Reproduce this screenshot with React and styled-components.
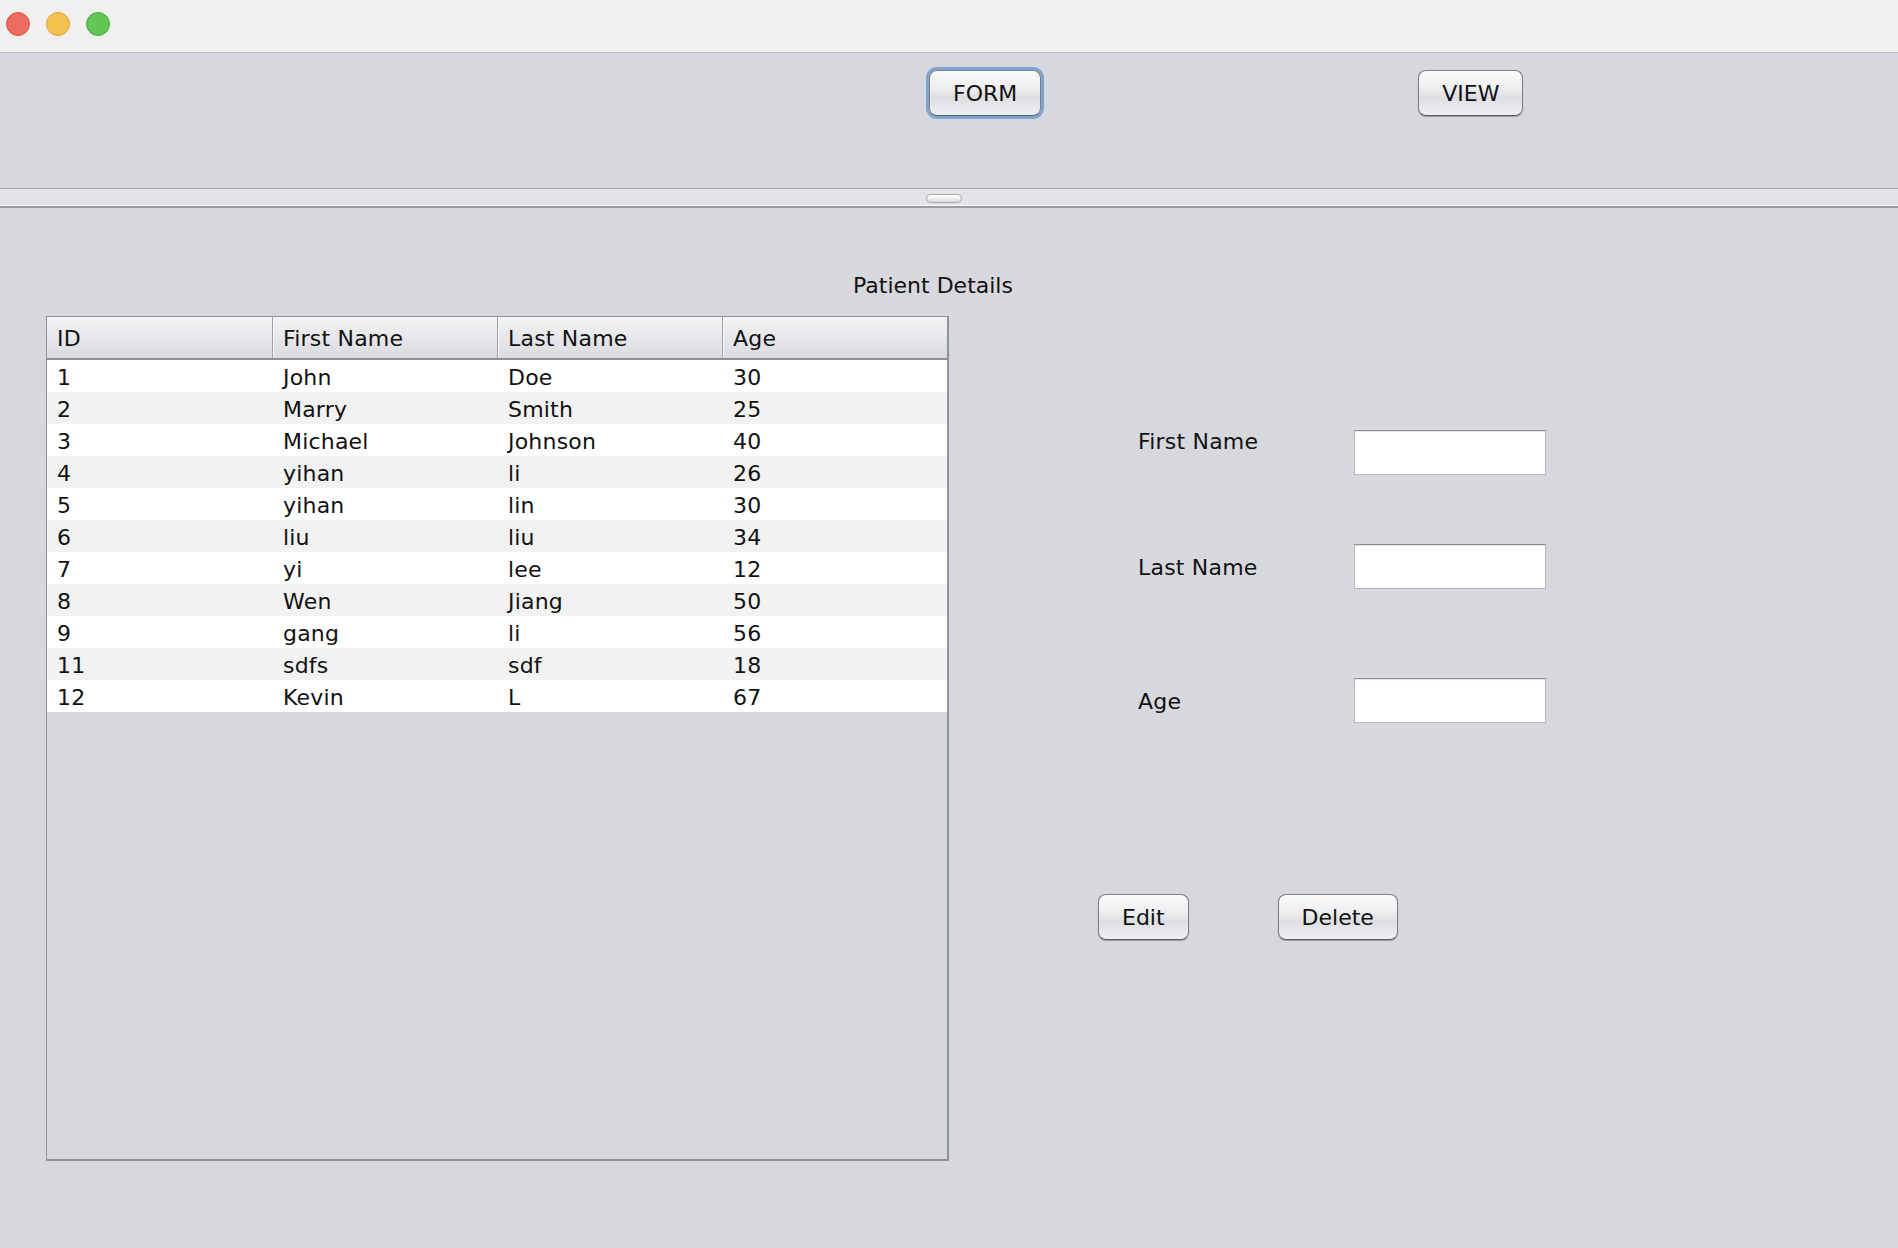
import React from 'react';
import styled, { createGlobalStyle } from 'styled-components';

const GlobalStyle = createGlobalStyle`
  html, body {
    margin: 0;
    padding: 0;
    background: #d7d8dd;
  }
  body {
    font-family: 'DejaVu Sans', 'Open Sans', sans-serif;
    color: #111;
  }
  * {
    box-sizing: border-box;
  }
`;

const Window = styled.div`
  width: 1898px;
  height: 1248px;
  display: flex;
  flex-direction: column;
  background: #d7d8dd;
  overflow: hidden;
`;

const TitleBar = styled.div`
  flex: none;
  height: 53px;
  background: #f0f0f0;
  border-bottom: 1px solid #b8b9bc;
  display: flex;
  align-items: flex-start;
  gap: 16px;
  padding: 12px 0 0 6px;
`;

const Light = styled.span`
  width: 24px;
  height: 24px;
  border-radius: 50%;
  background: ${p => p.$color};
  border: 1px solid ${p => p.$edge};
`;

const TopPanel = styled.div`
  flex: none;
  height: 135px;
  display: flex;
  align-items: flex-start;
  padding: 17px 0 0 929px;
  gap: 377px;
`;

const Button = styled.button`
  height: 46px;
  padding: 0 23px;
  font-family: 'DejaVu Sans', sans-serif;
  font-size: 22px;
  color: #111;
  border: 1px solid #7d7e82;
  border-bottom-color: #5a5b5e;
  border-radius: 8px;
  background: linear-gradient(to bottom, #fbfbfc 0%, #eeeef0 40%, #dddee1 60%, #eff0f2 100%);
  box-shadow: ${p => (p.$focused
    ? '0 0 0 3px #7fa4d3'
    : '0 1px 1px rgba(0, 0, 0, 0.3)')};
  cursor: pointer;
  outline: none;
`;

const Divider = styled.div`
  flex: none;
  height: 20px;
  background: #e2e3e6;
  border-top: 1px solid #a3a4a8;
  border-bottom: 2px solid #9a9ca1;
  box-shadow: inset 0 -1px 0 #f7f7f8;
  display: flex;
  justify-content: center;
  padding: 5px 10px 0 0;
`;

const Handle = styled.span`
  width: 36px;
  height: 9px;
  border-radius: 5px;
  border: 1px solid #a9aaae;
  background: linear-gradient(to bottom, #ffffff, #d9dadd);
`;

const BottomPanel = styled.div`
  flex: 1;
  display: flex;
  flex-direction: column;
  padding-top: 63px;
`;

const Title = styled.div`
  width: 1866px;
  text-align: center;
  font-size: 22px;
  line-height: 30px;
  margin-bottom: 15px;
`;

const Content = styled.div`
  display: flex;
  align-items: flex-start;
  padding-left: 46px;
`;

const TableFrame = styled.div`
  width: 903px;
  height: 845px;
  border: 2px solid #8f9298;
  border-left-width: 1px;
  border-top-width: 1px;
  display: flex;
  flex-direction: column;
  background: #d7d8dd;
`;

const HeaderRow = styled.div`
  display: grid;
  grid-template-columns: repeat(4, 1fr);
  height: 43px;
  background: linear-gradient(to bottom, #f3f3f5 0%, #e6e7ea 50%, #dadbdf 100%);
  border-bottom: 2px solid #8e9096;
`;

const HeaderCell = styled.div`
  display: flex;
  align-items: center;
  padding: 2px 0 0 10px;
  font-size: 22px;
  letter-spacing: 0.2px;
  line-height: 32px;
  border-left: ${p => (p.$first ? 'none' : '1px solid #9fa1a6')};
  box-shadow: ${p => (p.$first ? 'none' : 'inset 1px 0 0 #f6f6f7')};
`;

const Row = styled.div`
  display: grid;
  grid-template-columns: repeat(4, 1fr);
  height: 32px;
  background: ${p => (p.$odd ? '#f2f2f2' : '#ffffff')};
`;

const Cell = styled.div`
  padding: 3px 0 0 ${p => (p.$first ? 10 : 11)}px;
  font-size: 22px;
  letter-spacing: 0.2px;
  line-height: 29px;
  white-space: nowrap;
`;

const FormPanel = styled.div`
  display: flex;
  flex-direction: column;
  margin-left: 188px;
  padding-top: 114px;
`;

const FieldRow = styled.div`
  display: flex;
  align-items: flex-start;
  margin-top: ${p => p.$gap}px;
`;

const Label = styled.label`
  width: 217px;
  font-size: 22px;
  letter-spacing: 0.2px;
  line-height: 30px;
  margin-top: ${p => p.$offset}px;
  padding-left: 1px;
`;

const Input = styled.input`
  width: 192px;
  height: 45px;
  border: 1px solid #b7b8bb;
  border-top-color: #8d8e91;
  box-shadow: inset 0 1px 1px rgba(0, 0, 0, 0.12);
  background: #fff;
  font-family: 'DejaVu Sans', sans-serif;
  font-size: 20px;
  padding: 0 6px;
  outline: none;
`;

const Actions = styled.div`
  display: flex;
  gap: 89px;
  margin: 171px 0 0 -39px;
`;

const patients = [
  { id: 1, first: 'John', last: 'Doe', age: 30 },
  { id: 2, first: 'Marry', last: 'Smith', age: 25 },
  { id: 3, first: 'Michael', last: 'Johnson', age: 40 },
  { id: 4, first: 'yihan', last: 'li', age: 26 },
  { id: 5, first: 'yihan', last: 'lin', age: 30 },
  { id: 6, first: 'liu', last: 'liu', age: 34 },
  { id: 7, first: 'yi', last: 'lee', age: 12 },
  { id: 8, first: 'Wen', last: 'Jiang', age: 50 },
  { id: 9, first: 'gang', last: 'li', age: 56 },
  { id: 11, first: 'sdfs', last: 'sdf', age: 18 },
  { id: 12, first: 'Kevin', last: 'L', age: 67 },
];

const fields = [
  { label: 'First Name', gap: 0, offset: -3 },
  { label: 'Last Name', gap: 69, offset: 9 },
  { label: 'Age', gap: 89, offset: 9 },
];

export default function App() {
  return (
    <Window>
      <GlobalStyle />
      <TitleBar>
        <Light $color="#ee6b60" $edge="#d4534b" />
        <Light $color="#f6c04f" $edge="#d9a23d" />
        <Light $color="#62c655" $edge="#4ea942" />
      </TitleBar>
      <TopPanel>
        <Button $focused>FORM</Button>
        <Button>VIEW</Button>
      </TopPanel>
      <Divider>
        <Handle />
      </Divider>
      <BottomPanel>
        <Title>Patient Details</Title>
        <Content>
          <TableFrame>
            <HeaderRow>
              <HeaderCell $first>ID</HeaderCell>
              <HeaderCell>First Name</HeaderCell>
              <HeaderCell>Last Name</HeaderCell>
              <HeaderCell>Age</HeaderCell>
            </HeaderRow>
            {patients.map((p, i) => (
              <Row key={p.id} $odd={i % 2 === 1}>
                <Cell $first>{p.id}</Cell>
                <Cell>{p.first}</Cell>
                <Cell>{p.last}</Cell>
                <Cell>{p.age}</Cell>
              </Row>
            ))}
          </TableFrame>
          <FormPanel>
            {fields.map(f => (
              <FieldRow key={f.label} $gap={f.gap}>
                <Label $offset={f.offset}>{f.label}</Label>
                <Input />
              </FieldRow>
            ))}
            <Actions>
              <Button>Edit</Button>
              <Button>Delete</Button>
            </Actions>
          </FormPanel>
        </Content>
      </BottomPanel>
    </Window>
  );
}
